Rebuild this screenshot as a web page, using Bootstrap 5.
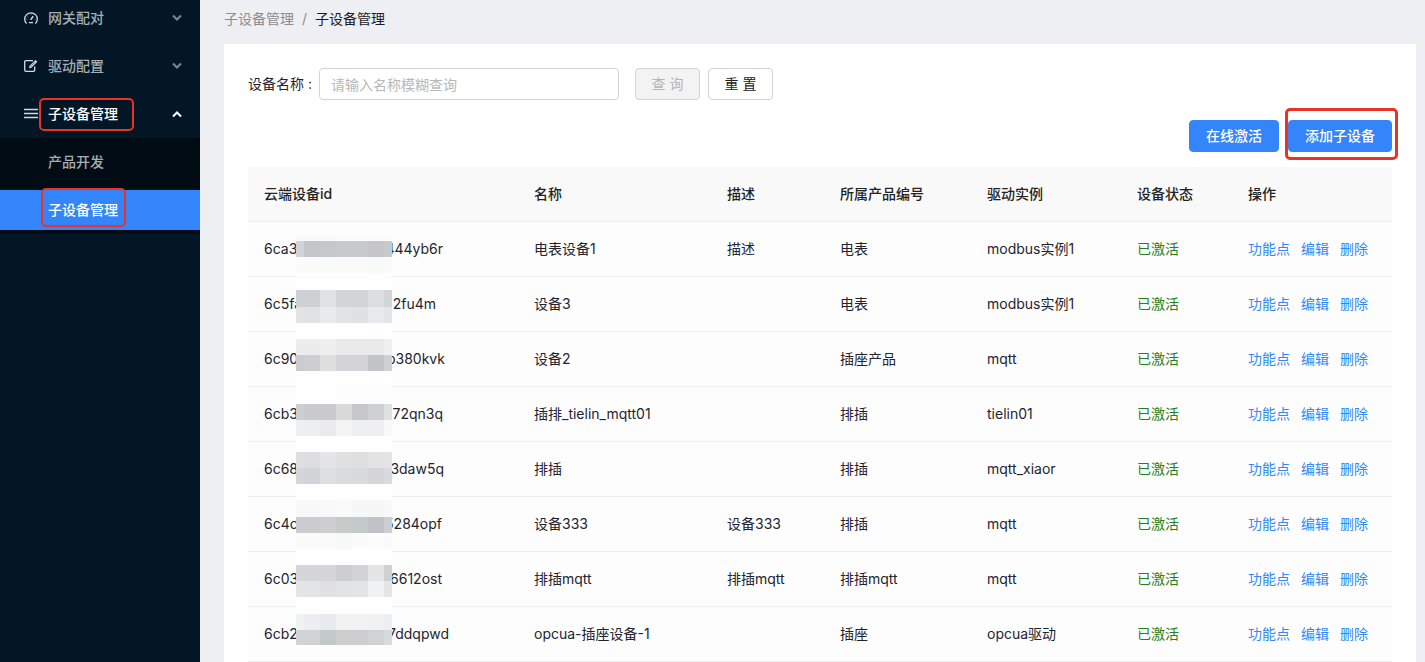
<!DOCTYPE html>
<html lang="zh-CN">
<head>
<meta charset="utf-8">
<meta name="viewport" content="width=device-width, initial-scale=1">
<title>子设备管理</title>
<link href="https://cdn.jsdelivr.net/npm/bootstrap@5.3.0/dist/css/bootstrap.min.css" rel="stylesheet">
<style>
body{font-family:Inter,"Noto Sans CJK SC",sans-serif;font-size:14px;line-height:22px;color:#1f2430;background:#eeeff3}
a{text-decoration:none}
.side{width:200px;background:#031625}
.menu-top{gap:12px}
.menu-item{height:36px;gap:10px;padding:0 18px 0 24px;color:#a6adb4;font-weight:500;background:none;border:0;text-align:left}
.menu-item svg{flex:none}
.menu-item.open{color:#fff}
.menu-sub{background:#010c14;margin-top:6px}
.sub-link{height:40px;padding-left:48px;color:#a6adb4;font-weight:500}
.sub-link.active{background:#3585fa;color:#fff}
.mark-box{position:absolute;border:2px solid #ea3324;border-radius:5px;pointer-events:none}
.mark-box.m-parent{inset:2px 66px 1px 39px}
.mark-box.m-child{inset:-2px 74px 3px 41px}
.mark-box.m-add{inset:-12px -6px -8px -3px;border-width:3px}
.crumbs{height:44px;padding:8px 24px}
.crumbs .breadcrumb-item,.crumbs a{color:#8c8d90}
.crumbs .breadcrumb-item.active{color:#1c1d1f}
.breadcrumb-item+.breadcrumb-item::before{color:#8c8d90}
.panel{margin-left:24px;margin-right:9px;padding:24px}
.name-label{width:71px}
.name-input{width:300px;height:32px;font-size:14px;border-color:#d4d4d4;border-radius:4px;padding:0 11px}
.name-input::placeholder{color:#b8b8b8}
.tools{gap:9px;margin:20px 0 15px}
.act{height:32px;min-width:65px;padding:0 15px;font-size:14px;line-height:22px;border-radius:4px;border-color:#d4d4d4;color:#222;background:#fff}
.act:disabled{background:#f3f3f3;border-color:#d4d4d4;color:#b5b5b5;opacity:1}
.act.main-act{padding:0 16px;background:#3585fa;border-color:#3585fa;color:#fff;font-weight:500}
.dev-table{table-layout:fixed;--bs-table-bg:#fdfdfd;--bs-table-color:#1f2430;border-radius:4px 4px 0 0;overflow:hidden}
.dev-table>:not(caption)>*>*{padding:16px;border-bottom:1px solid #ececec;white-space:nowrap}
.dev-table thead th{background:#f9f9f9;font-weight:500;color:#222}
.dev-table .ok{color:#27801f}
.dev-table td a{color:#2f89f8;margin-right:11px}
.dev-table td a:last-child{margin-right:0}
.c-id{width:270px}.c-desc{width:113px}.c-prod{width:147px}.c-drv{width:150px}.c-st{width:111px}.c-op{width:160px}
.mosaic{position:absolute;left:48px;top:69px}
</style>
</head>
<body>
<div class="d-flex vh-100 overflow-hidden">
  <nav class="side flex-shrink-0" aria-label="主菜单">
    <div class="menu-top d-flex flex-column">
      <button class="menu-item d-flex align-items-center" type="button">
        <svg width="14" height="14" viewBox="0 0 14 14" fill="none" stroke="#d5d9dc" stroke-width="1.3"><path d="M2.600 12.600A6.300 6.300 0 1 1 11.400 12.600"/><path d="M5 11.600h4"/><path d="M6.600 8.800L9.200 5.200" stroke-width="1.5"/><path d="M6.500 3.300h1M3.200 5.200h1M2.400 8.300h1M10.600 8.300h1" stroke-width=".8" opacity=".6"/></svg>
        <span class="flex-grow-1">网关配对</span>
        <svg width="10" height="8" viewBox="0 0 10 8" fill="none" stroke="#7d8890" stroke-width="2"><path d="M1 1.500l4 4 4-4"/></svg>
      </button>
      <button class="menu-item d-flex align-items-center" type="button">
        <svg width="14" height="14" viewBox="0 0 14 14" fill="none" stroke="#d5d9dc" stroke-width="1.3"><path d="M9 1.700H2Q.7 1.700 .7 3v8Q.7 12.300 2 12.300h7.400Q10.700 12.300 10.700 11V7.500"/><path d="M5 9.300l.5-2.500L11.500 1l1.900 1.800-6 6z" fill="#d5d9dc" stroke="none"/><path d="M6.500 7.600l4.300-4.300" stroke="#031625" stroke-width=".5"/></svg>
        <span class="flex-grow-1">驱动配置</span>
        <svg width="10" height="8" viewBox="0 0 10 8" fill="none" stroke="#7d8890" stroke-width="2"><path d="M1 1.500l4 4 4-4"/></svg>
      </button>
      <div class="position-relative">
        <button class="menu-item open d-flex align-items-center w-100" type="button" aria-expanded="true">
          <svg width="14" height="14" viewBox="0 0 14 14" stroke="#d5d9dc" stroke-width="1.3"><path d="M0 2.500h14M0 6.500h14M0 10.500h14"/></svg>
          <span class="flex-grow-1">子设备管理</span>
          <svg width="10" height="8" viewBox="0 0 10 8" fill="none" stroke="#fff" stroke-width="2"><path d="M1 6.500l4-4 4 4"/></svg>
        </button>
        <span class="mark-box m-parent"></span>
      </div>
    </div>
    <div class="menu-sub d-flex flex-column gap-2 py-1">
      <a class="sub-link d-flex align-items-center" href="#">产品开发</a>
      <a class="sub-link active d-flex align-items-center position-relative" href="#" aria-current="page">子设备管理<span class="mark-box m-child"></span></a>
    </div>
  </nav>

  <main class="flex-grow-1 d-flex flex-column">
    <nav class="crumbs flex-shrink-0" aria-label="breadcrumb">
      <ol class="breadcrumb mb-0">
        <li class="breadcrumb-item"><a href="#">子设备管理</a></li>
        <li class="breadcrumb-item active" aria-current="page">子设备管理</li>
      </ol>
    </nav>
    <section class="panel bg-white flex-grow-1">
      <form class="d-flex align-items-center">
        <label class="name-label" for="devName">设备名称&nbsp;:</label>
        <input id="devName" class="form-control name-input me-3" type="text" placeholder="请输入名称模糊查询">
        <button class="btn act me-2" type="button" disabled>查 询</button>
        <button class="btn act" type="button">重 置</button>
      </form>
      <div class="tools d-flex justify-content-end">
        <button class="btn act main-act" type="button">在线激活</button>
        <div class="position-relative">
          <button class="btn act main-act" type="button">添加子设备</button>
          <span class="mark-box m-add"></span>
        </div>
      </div>
      <div class="position-relative">
        <table class="table dev-table mb-0">
          <colgroup><col class="c-id"><col><col class="c-desc"><col class="c-prod"><col class="c-drv"><col class="c-st"><col class="c-op"></colgroup>
          <thead><tr><th>云端设备id</th><th>名称</th><th>描述</th><th>所属产品编号</th><th>驱动实例</th><th>设备状态</th><th>操作</th></tr></thead>
          <tbody>
            <tr><td><div class="d-flex justify-content-between" style="width:179px"><span>6ca3</span><span>444yb6r</span></div></td><td>电表设备1</td><td>描述</td><td>电表</td><td>modbus实例1</td><td class="ok">已激活</td><td><a href="#">功能点</a><a href="#">编辑</a><a href="#">删除</a></td></tr>
            <tr><td><div class="d-flex justify-content-between" style="width:172px"><span>6c5fa</span><span>32fu4m</span></div></td><td>设备3</td><td></td><td>电表</td><td>modbus实例1</td><td class="ok">已激活</td><td><a href="#">功能点</a><a href="#">编辑</a><a href="#">删除</a></td></tr>
            <tr><td><div class="d-flex justify-content-between" style="width:181px"><span>6c90</span><span>b380kvk</span></div></td><td>设备2</td><td></td><td>插座产品</td><td>mqtt</td><td class="ok">已激活</td><td><a href="#">功能点</a><a href="#">编辑</a><a href="#">删除</a></td></tr>
            <tr><td><div class="d-flex justify-content-between" style="width:179px"><span>6cb3</span><span>72qn3q</span></div></td><td>插排_tielin_mqtt01</td><td></td><td>排插</td><td>tielin01</td><td class="ok">已激活</td><td><a href="#">功能点</a><a href="#">编辑</a><a href="#">删除</a></td></tr>
            <tr><td><div class="d-flex justify-content-between" style="width:180px"><span>6c68</span><span>3daw5q</span></div></td><td>排插</td><td></td><td>排插</td><td>mqtt_xiaor</td><td class="ok">已激活</td><td><a href="#">功能点</a><a href="#">编辑</a><a href="#">删除</a></td></tr>
            <tr><td><div class="d-flex justify-content-between" style="width:178px"><span>6c4c</span><span>5284opf</span></div></td><td>设备333</td><td>设备333</td><td>排插</td><td>mqtt</td><td class="ok">已激活</td><td><a href="#">功能点</a><a href="#">编辑</a><a href="#">删除</a></td></tr>
            <tr><td><div class="d-flex justify-content-between" style="width:178px"><span>6c03</span><span>6612ost</span></div></td><td>排插mqtt</td><td>排插mqtt</td><td>排插mqtt</td><td>mqtt</td><td class="ok">已激活</td><td><a href="#">功能点</a><a href="#">编辑</a><a href="#">删除</a></td></tr>
            <tr><td><div class="d-flex justify-content-between" style="width:185px"><span>6cb2</span><span>7ddqpwd</span></div></td><td>opcua-插座设备-1</td><td></td><td>插座</td><td>opcua驱动</td><td class="ok">已激活</td><td><a href="#">功能点</a><a href="#">编辑</a><a href="#">删除</a></td></tr>
          </tbody>
        </table>
        <svg class="mosaic" id="mosaic" width="96" height="409" viewBox="0 0 96 409" shape-rendering="crispEdges" aria-hidden="true"><rect width="96" height="409" fill="#fefefe"/></svg>
      </div>
    </section>
  </main>
</div>
<script src="https://cdn.jsdelivr.net/npm/bootstrap@5.3.0/dist/js/bootstrap.bundle.min.js"></script>
<script>
// Privacy mosaic over the middle of the ids: [top, height, colour of each of the 7 columns]
const xs = [0, 8, 24, 40, 56, 72, 88, 96];
const bands = [
  [0, 5, 'f9f9f9 f9f9f9 f9f9f9 fbfbfb fbfbfb fbfbfb fbfbfb'],
  [5, 16, 'd2d3d7 c4c7ca c4c8cb c8c9cd c8c9cc c6c6ca c8c9cd'],
  [21, 16, 'fbfbfb fbfbfb f9fafa fafafa fafafa f8fafa fafafa'],
  [54, 17, 'cdd1d3 cfd0d2 e1e2e4 d3d4d7 d3d4d7 dcdde0 d3d4d8'],
  [71, 16, 'e2e3e5 e1e2e3 e9eaec e2e3e5 e0e1e3 e9eaed e4e5e7'],
  [103, 16, 'ebecee ebecee eeeeee e9eaec e9eaec e9eaec f0f0f0'],
  [119, 16, 'cacbd0 cfcfd2 dedede d3d3d8 d3d3d8 c1c5c8 cfd0d4'],
  [152, 16, 'fefefe fefefe fefefe fdfdfd fdfdfd fcfefd fcfefd'],
  [168, 16, 'cecfd3 c9cacd c9cacd d8d9db c6c7cb cfd0d4 dfe0e2'],
  [184, 16, 'eff0f2 edeef0 ebebec f3f3f3 eff0f2 f0f0f0 f8f8f8'],
  [216, 16, 'dedfe2 dcdde0 e4e5e8 e0e1e3 dedfe1 e2e3e5 e3e4e6'],
  [232, 16, 'd5d6db d2d3d6 dedfe1 dadbdd d9dadc d5d5d7 d9dadf'],
  [264, 17, 'f8f8f8 f8f8f8 f9f9f9 f8fbfa f6f8f8 f5f8f7 f8f8f8'],
  [281, 16, 'cbccd0 cbccd0 cecfd3 c8cac9 c4c9cb c1c2c7 cdced2'],
  [297, 16, 'fafafa fafafa fafafa f7f9f8 fbfbfb fcfcfc fafafa'],
  [329, 16, 'd5d6d9 d5d6d9 d5d5da cdced2 d2d3d6 e4e5e7 d0d1d5'],
  [345, 16, 'e4e5e7 e3e4e6 e0e1e3 e2e3e5 e3e4e5 f0f1f4 e4e5e7'],
  [378, 16, 'f0f1f1 ecedf0 e9eaed f2f2f2 f2f2f2 eff2f1 edeef0'],
  [394, 15, 'd0d4d7 d0d3d6 c3c8ca cdced0 cdced1 cfd3d6 d9dadc']
];
const mosaic = document.getElementById('mosaic');
for (const [y, h, row] of bands) row.split(' ').forEach((c, i) => {
  const r = document.createElementNS('http://www.w3.org/2000/svg', 'rect');
  for (const [k, v] of Object.entries({x: xs[i], y, width: xs[i + 1] - xs[i], height: h, fill: '#' + c})) r.setAttribute(k, v);
  mosaic.append(r);
});
</script>
</body>
</html>
